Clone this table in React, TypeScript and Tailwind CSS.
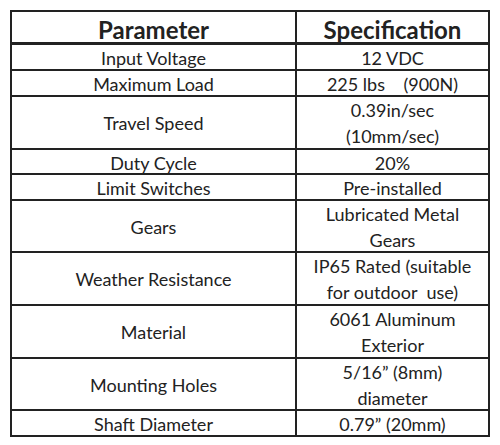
const rows: { param: string; spec: string[]; h: string }[] = [
  { param: 'Input Voltage', spec: ['12 VDC'], h: 'h-[26px] border-b-2' },
  { param: 'Maximum Load', spec: ['225 lbs\u00a0\u00a0\u00a0 (900N)'], h: 'h-[26px] border-b-2' },
  { param: 'Travel Speed', spec: ['0.39in/sec', '(10mm/sec)'], h: 'h-[53px] border-b-2' },
  { param: 'Duty Cycle', spec: ['20%'], h: 'h-[25px] border-b-2' },
  { param: 'Limit Switches', spec: ['Pre-installed'], h: 'h-[26px] border-b-2' },
  { param: 'Gears', spec: ['Lubricated Metal', 'Gears'], h: 'h-[52px] border-b-2' },
  { param: 'Weather Resistance', spec: ['IP65 Rated (suitable', 'for outdoor\u00a0 use)'], h: 'h-[53px] border-b-2' },
  { param: 'Material', spec: ['6061 Aluminum', 'Exterior'], h: 'h-[53px] border-b-2' },
  { param: 'Mounting Holes', spec: ['5/16\u201d (8mm)', 'diameter'], h: 'h-[52px] border-b-2' },
  { param: 'Shaft Diameter', spec: ['0.79\u201d (20mm)'], h: 'h-[24px]' },
];

export default function App() {
  return (
    <div className="w-[500px] h-[445px] bg-white pt-[10px] pl-[10px] font-['Lato',sans-serif] text-[#222]">
      <div className="w-[480px] border-2 border-[#222]">
        <div className="grid grid-cols-[285px_1fr] h-[33px] border-b-[3px] border-[#222] text-[24px] font-bold">
          <div className="flex items-center justify-center border-r-2 border-[#222]">Parameter</div>
          <div className="flex items-center justify-center">Specification</div>
        </div>
        {rows.map((r) => (
          <div key={r.param} className={`grid grid-cols-[285px_1fr] border-[#222] text-[18px] leading-[26px] ${r.h}`}>
            <div className="flex items-center justify-center border-r-2 border-[#222]">{r.param}</div>
            <div className="flex flex-col items-center justify-center">
              {r.spec.map((s) => (
                <div key={s}>{s}</div>
              ))}
            </div>
          </div>
        ))}
      </div>
    </div>
  );
}
